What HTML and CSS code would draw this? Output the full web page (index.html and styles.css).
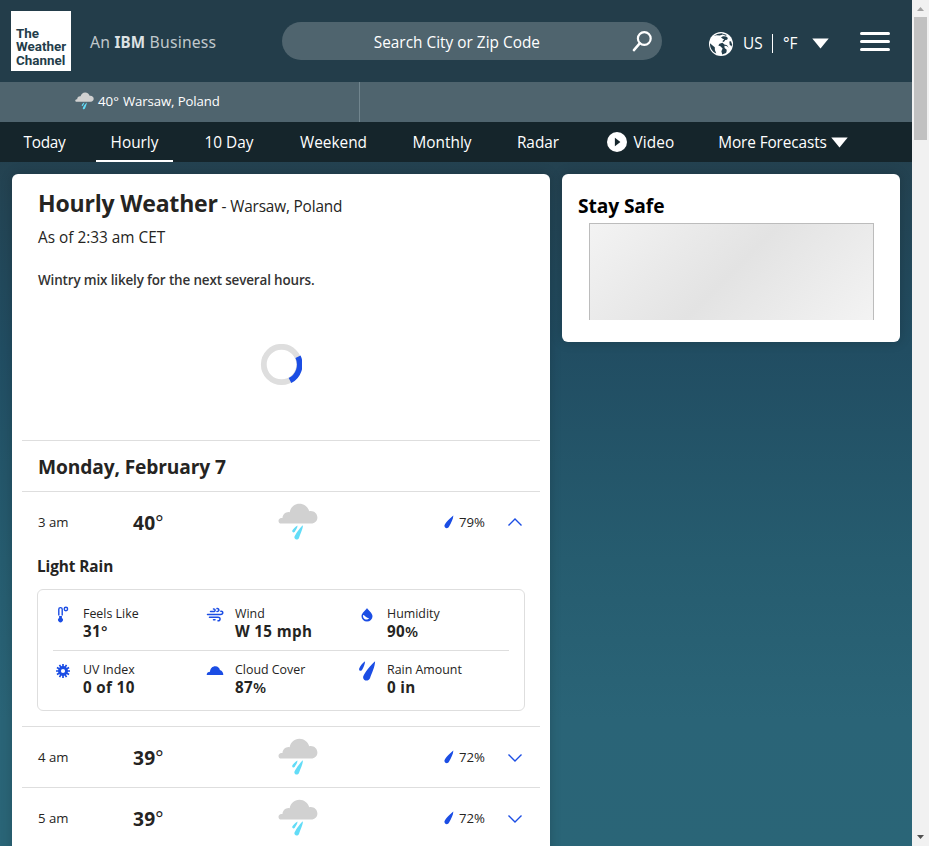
FILE: index.html
```html
<!DOCTYPE html>
<html lang="en">
<head>
<meta charset="utf-8">
<title>Hourly Weather - Warsaw, Poland</title>
<link rel="stylesheet" href="styles.css">
</head>
<body>
<svg class="defs" aria-hidden="true">
  <symbol id="rain-cloud" viewBox="0 0 40 38">
    <path fill="#d1d1d1" d="M3.3 20.6C1.700 20.600.5 19.400.5 17.900S1.700 15.200 3.300 15.100L4.500 15.100C4.500 11.800 7.300 9 10.800 9.100L11.700 9.200C12.400 4.400 16.400 .8 21.300.8 26.200.8 30.100 4.100 31.200 8.200 35.700 7.300 39.400 10.500 39.400 14.500 39.400 17.900 36.700 20.600 33.200 20.600Z"/>
    <path fill="#62dcf7" d="M24.8 22.300C25.300 24.900 22.900 29.700 21 34.900 19.600 37.700 15.600 36.400 16.500 33.600 17.200 31.900 20.500 26.500 24.800 22.300ZM19.500 22.400C19.600 24.800 17.900 26.700 16.800 28.800 15.800 30.200 13.700 29.200 14.300 27.600 15 26.200 16.800 24 19.500 22.400Z"/>
  </symbol>
  <symbol id="drop" viewBox="0 0 10 14">
    <path fill="#1b4de4" d="M9.300.4C9.500 3.500 7.300 7.500 5.100 11.600 3.700 14.300-.1 13.200.5 10.200 1.600 7.500 5.600 3.600 9.300.4Z"/>
  </symbol>
  <symbol id="chevron" viewBox="0 0 16 10">
    <path fill="none" stroke="#1b4de4" stroke-width="1.400" d="M1.500 1.600 8 8 14.500 1.600"/>
  </symbol>
</svg>

<div class="viewport">
  <div class="page">
    <header class="header">
      <div class="logo">The<br>Weather<br>Channel</div>
      <div class="tagline">An <b>IBM</b> Business</div>
      <div class="search">
        <span class="search-text">Search City or Zip Code</span>
        <svg class="search-icon" width="20" height="22" viewBox="0 0 20 22"><circle cx="12.300" cy="8.500" r="6.400" fill="none" stroke="#fff" stroke-width="2.200"/><path d="M7.700 13.400 1.900 20.100" stroke="#fff" stroke-width="2.500" stroke-linecap="round"/></svg>
      </div>
      <svg class="globe" width="24" height="24" viewBox="0 0 24 24"><circle cx="12" cy="12" r="12" fill="#fff"/><g fill="#233d4a"><path d="M4.600 4.100 8.300 1.900 12.500 1.200 17.800 2.900 16.800 3.700 13.800 2.500 10.800 3.500 7.500 3.300Z"/><path d="M12 5.300 14.200 4.200 17.100 4.500 18.900 6.100 18.100 7.800 16.300 8 14.800 9.900 13.300 9.200 15.200 7.200 13.700 6.700Z"/><path d="M1 11.200 3.300 13.300 5.800 15.300 5.900 18 7.300 21.500C3.300 19.800 .8 16 1 11.200Z"/><path d="M10.500 11.800 13.500 10.800 15.400 12.500 18 13.200 19.600 15.500 18.800 18.500 17 21 13.200 22.600 12.400 19.300 13.600 16.600 11.400 14.300 9.300 13.500Z"/><path d="M20.300 9.500 22 9.300 23.100 12.400 22.500 14.400 20.700 12.500Z"/></g><path fill="#fff" d="M15.400 13.800 17.500 14 21.300 16.600 19.500 20 17.500 21 17.700 17.700 15.600 16Z"/></svg>
      <span class="locale">US</span>
      <span class="unit">°F</span>
      <svg class="unit-arrow" width="17" height="11" viewBox="0 0 17 11"><path d="M.3.500H16.700L8.500 10.500Z" fill="#fff"/></svg>
      <div class="menu"><i></i><i></i><i></i></div>
    </header>

    <div class="places">
      <div class="place">
        <svg width="19" height="18" viewBox="0 0 40 38"><use href="#rain-cloud"/></svg>
        <span class="place-temp">40°</span>
        <span class="place-name">Warsaw, Poland</span>
      </div>
    </div>

    <nav class="nav">
      <a>Today</a>
      <a class="active">Hourly</a>
      <a>10 Day</a>
      <a>Weekend</a>
      <a>Monthly</a>
      <a>Radar</a>
      <a class="video"><svg width="20" height="20" viewBox="0 0 20 20"><circle cx="10" cy="10" r="10" fill="#fff"/><path d="M7.900 5.800 13.400 10 7.900 14.200Z" fill="#15252b"/></svg><span>Video</span></a>
      <a class="more"><span>More Forecasts</span><svg width="17" height="11" viewBox="0 0 17 11"><path d="M.3.500H16.700L8.500 10.500Z" fill="#fff"/></svg></a>
    </nav>

    <div class="columns">
      <main class="card hourly">
        <h1>Hourly Weather<span> - Warsaw, Poland</span></h1>
        <p class="asof">As of 2:33 am CET</p>
        <p class="summary">Wintry mix likely for the next several hours.</p>
        <div class="loading">
          <svg width="42" height="42" viewBox="0 0 42 42"><circle cx="21.500" cy="20.500" r="17.700" fill="none" stroke="#dedede" stroke-width="5.800"/><path d="M38 12.800A18.200 18.200 0 0 1 30 36.600" fill="none" stroke="#1b4de4" stroke-width="5.600"/></svg>
        </div>
        <h2>Monday, February 7</h2>

        <section class="hour">
          <div class="hour-row">
            <span class="time">3 am</span>
            <span class="temp"><b>40</b>°</span>
            <svg class="sky" width="40" height="38"><use href="#rain-cloud"/></svg>
            <svg class="drop" width="10" height="14"><use href="#drop"/></svg>
            <span class="chance">79%</span>
            <svg class="chevron up" width="16" height="10"><use href="#chevron"/></svg>
          </div>
          <h3>Light Rain</h3>
          <div class="details">
            <div class="detail">
              <svg width="20" height="22" viewBox="0 0 20 22"><g fill="none" stroke="#1b4de4"><path stroke-width="1.400" d="M5.800 11.500V5.300A1.700 1.700 0 0 1 9.200 5.300V11.500"/><circle cx="12.900" cy="5" r="1.700" stroke-width="1.400"/></g><path fill="#1b4de4" d="M6.100 12H8.900V14A2.400 2.400 0 1 1 6.100 14Z"/></svg>
              <div><span class="label">Feels Like</span><span class="value">31<i>°</i></span></div>
            </div>
            <div class="detail">
              <svg width="20" height="22" viewBox="0 0 20 22"><g fill="none" stroke="#1b4de4" stroke-width="1.500" stroke-linecap="round"><path d="M5.500 7.500H8.500C10.700 7.500 10.600 4.800 8.500 4.900M2.500 10.500H15.500C18.600 10.500 18.300 6.900 15.900 7.300M12 7.500C14.600 7.500 14.300 4.300 12 4.600M4.500 13.200H13C15.900 13.200 15.500 17.200 13 16.800M8.500 15.700H10"/></g></svg>
              <div><span class="label">Wind</span><span class="value">W 15 mph</span></div>
            </div>
            <div class="detail">
              <svg width="20" height="22" viewBox="0 0 20 22"><path fill="#1b4de4" d="M10 4C11.200 6.300 15.500 8.900 15.500 12.300A5.500 5.200 0 0 1 4.500 12.300C4.500 8.900 8.800 6.300 10 4Z"/><path fill="#fff" d="M6.200 10.900C7.800 10.800 8.500 13.600 12.200 14.200 9.600 17 5.100 14.700 6.200 10.900Z"/></svg>
              <div><span class="label">Humidity</span><span class="value">90<i>%</i></span></div>
            </div>
            <div class="detail">
              <svg width="20" height="22" viewBox="0 0 20 22"><circle cx="10" cy="11" r="3.500" fill="none" stroke="#1b4de4" stroke-width="2.800"/><path fill="none" stroke="#1b4de4" stroke-width="1.700" d="M10 4V18M3 11H17M6.500 4.940 13.500 17.060M13.500 4.940 6.500 17.060M3.940 7.500 16.060 14.500M3.940 14.500 16.060 7.500"/><circle cx="10" cy="11" r="2.100" fill="#fff"/></svg>
              <div><span class="label">UV Index</span><span class="value">0 of 10</span></div>
            </div>
            <div class="detail">
              <svg width="20" height="22" viewBox="0 0 20 22"><path fill="#1b4de4" d="M1.700 14.900C1.700 12.700 3.200 11.800 5 11.800 5.200 8.500 7.500 6.300 10.300 6.300 13 6.300 14.500 8.200 14.900 9.900 17.300 10.600 18.400 12.800 18.300 14.900Z"/></svg>
              <div><span class="label">Cloud Cover</span><span class="value">87<i>%</i></span></div>
            </div>
            <div class="detail">
              <svg width="20" height="22" viewBox="0 0 20 22"><path fill="#1b4de4" d="M18.100 1.200C17.900 7 14.700 13.300 13 18.200 11.200 22.400 5 20.700 6.300 16.300 7.800 12.300 13 5.600 18.100 1.200ZM8.100 1.200C7.900 4.800 6.300 7.500 5.300 9.500 4.400 11.500 1.500 11 2.200 8.400 3.300 5.800 5.500 3.100 8.100 1.200Z"/></svg>
              <div><span class="label">Rain Amount</span><span class="value">0 in</span></div>
            </div>
          </div>
        </section>

        <section class="hour">
          <div class="hour-row">
            <span class="time">4 am</span>
            <span class="temp"><b>39</b>°</span>
            <svg class="sky" width="40" height="38"><use href="#rain-cloud"/></svg>
            <svg class="drop" width="10" height="14"><use href="#drop"/></svg>
            <span class="chance">72%</span>
            <svg class="chevron" width="16" height="10"><use href="#chevron"/></svg>
          </div>
        </section>

        <section class="hour">
          <div class="hour-row">
            <span class="time">5 am</span>
            <span class="temp"><b>39</b>°</span>
            <svg class="sky" width="40" height="38"><use href="#rain-cloud"/></svg>
            <svg class="drop" width="10" height="14"><use href="#drop"/></svg>
            <span class="chance">72%</span>
            <svg class="chevron" width="16" height="10"><use href="#chevron"/></svg>
          </div>
        </section>
      </main>

      <aside class="card safe">
        <h2>Stay Safe</h2>
        <div class="placeholder"></div>
      </aside>
    </div>
  </div>

  <div class="scrollbar">
    <svg width="17" height="17" viewBox="0 0 17 17"><path d="M5 11 8.500 7 12 11Z" fill="#a3a3a3"/></svg>
    <div class="thumb"></div>
    <svg class="down" width="17" height="17" viewBox="0 0 17 17"><path d="M5 6 8.500 10 12 6Z" fill="#505050"/></svg>
  </div>
</div>
</body>
</html>
```
FILE: styles.css
```css
* { box-sizing: border-box; }

body {
  margin: 0;
  overflow: hidden;
  font-family: "Open Sans", "Noto Sans", sans-serif;
  font-size: 15.36px;
  color: #252422;
}

h1, h2, h3, p { margin: 0; }
svg { display: block; flex: none; }
.defs { display: none; }

.viewport {
  display: flex;
  height: 846px;
  overflow: hidden;
}

.page {
  width: 912px;
  height: 846px;
  overflow: hidden;
  background: linear-gradient(#233d4a 0, #24414f 150px, #214d62 350px, #265c6f 560px, #2a6477 720px, #2a6577 846px);
}

/* Header */
.header {
  display: flex;
  align-items: center;
  height: 82px;
  background: #233d4a;
  color: #fff;
  white-space: nowrap;
}

.logo {
  width: 60px;
  height: 60px;
  margin-left: 11px;
  padding: 16px 0 0 5px;
  background: #fff;
  color: #233d4a;
  font: bold 13.4px/13.300px Roboto, sans-serif;
}

.tagline {
  width: 192px;
  padding: 1px 0 0 19px;
  font-family: "Noto Sans", sans-serif;
  font-size: 15.7px;
  letter-spacing: 0.2px;
  color: #c0c8cc;
}
.tagline b { font-size: 15.2px; color: #dde2e4; }

.search {
  display: flex;
  justify-content: flex-end;
  align-items: center;
  width: 380px;
  height: 38px;
  margin-left: 19px;
  padding-right: 10px;
  border-radius: 19px;
  background: #4f646e;
}
.search-text {
  padding-top: 2px;
  margin-right: 92px;
  letter-spacing: 0.02px;
}
.search-icon { margin-top: -1px; }

.globe { margin: 6px 0 0 47px; }
.locale {
  width: 40px;
  height: 19px;
  margin: 5px 0 0;
  padding-left: 10px;
  border-right: 1px solid #fff;
  line-height: 20px;
}
.unit { width: 39px; padding: 5px 0 0 10px; line-height: 20px; }
.unit-arrow { margin-top: 5px; }

.menu {
  display: grid;
  gap: 5px;
  width: 30px;
  margin: 1px 0 0 31px;
}
.menu i { height: 3px; border-radius: 1.5px; background: #fff; }

/* Saved locations */
.places { height: 40px; background: #4f646e; color: #fff; }
.place {
  display: flex;
  align-items: center;
  width: 360px;
  height: 40px;
  padding: 0 0 2px 75px;
  border-right: 1px solid #71858e;
  font-size: 13.3px;
}
.place-temp { width: 25px; margin-left: 4px; font-size: 13.3px; }
.place-name { font-size: 13.2px; font-weight: 500; letter-spacing: -0.11px; }

/* Navigation */
.nav {
  display: grid;
  grid-template-columns: 71px 77px 80px 97px 88px 72px 101px 152px;
  grid-template-rows: 40px;
  column-gap: 16px;
  height: 40px;
  padding-left: 9px;
  background: #15252b;
  color: #fff;
  line-height: 42px;
  text-align: center;
  white-space: nowrap;
}
.nav .active { border-bottom: 2px solid #fff; }
.nav a:first-child { letter-spacing: -0.25px; }
.nav .video, .nav .more {
  display: flex;
  justify-content: center;
  align-items: center;
}
.nav .video { gap: 7px; letter-spacing: 0.1px; }
.nav .more { gap: 4px; letter-spacing: -0.1px; }
.nav span { padding-top: 2px; }

/* Content */
.columns {
  display: flex;
  align-items: flex-start;
  gap: 12px;
  padding: 12px;
}
.card {
  border-radius: 6px;
  background: #fff;
  box-shadow: 0 0 12px rgba(0, 0, 0, 0.18);
}
.hourly { width: 538px; height: 700px; padding: 13px 10px 0; }

h1 {
  height: 32px;
  padding-left: 16px;
  font-size: 23.04px;
  line-height: 32px;
  letter-spacing: -0.2px;
  white-space: nowrap;
}
h1 span {
  font-size: 15.36px;
  font-weight: 400;
  line-height: 1;
  letter-spacing: -0.17px;
}
.asof { margin: 7px 0 20px; padding-left: 16px; line-height: 24px; }
.summary {
  padding-left: 16px;
  font-size: 13.44px;
  font-weight: 600;
  line-height: 20px;
  letter-spacing: -0.14px;
  color: #333;
}
.loading {
  display: flex;
  justify-content: center;
  align-items: center;
  height: 150px;
  padding-bottom: 1px;
}
.hourly h2 {
  height: 51px;
  padding: 1px 0 0 16px;
  border-top: 1px solid #dedede;
  font-size: 19.2px;
  font-weight: 700;
  line-height: 50px;
  letter-spacing: -0.13px;
}

.hour { border-top: 1px solid #dedede; padding: 0 15px; }
.hour-row {
  display: grid;
  grid-template-columns: 95px 145px 166px 15px 48px 16px;
  align-items: center;
  height: 60px;
  padding-left: 1px;
}
.time, .chance { font-size: 13.2px; }
.temp { font-size: 19.2px; }
.temp b { letter-spacing: 0.2px; }

h3 {
  margin: 4px 0 11px;
  font-size: 15.36px;
  line-height: 22px;
  letter-spacing: -0.08px;
}
.chevron { margin-top: 1px; }
.chevron.up { margin-top: 0; transform: rotate(180deg); }

.details {
  display: grid;
  grid-template-columns: repeat(3, 152px);
  grid-template-rows: 61px 59px;
  height: 122px;
  margin-bottom: 15px;
  padding: 0 15px;
  border: 1px solid #dedede;
  border-radius: 6px;
}
.detail { display: flex; gap: 10px; padding-top: 15px; white-space: nowrap; }
.detail:nth-child(-n + 3) { border-bottom: 1px solid #dedede; }
.detail:nth-child(n + 4) { padding-top: 10px; }
.detail svg { margin-top: -1px; }
.label, .value { display: block; }
.label { font-size: 12.4px; line-height: 17px; }
.value {
  font-size: 15.2px;
  font-weight: 700;
  line-height: 18px;
  letter-spacing: 0.35px;
}
.value i { font-style: normal; font-weight: 600; }

.safe { width: 338px; height: 168px; padding: 15px 16px 0; }
.safe h2 {
  padding-bottom: 1px;
  font-size: 19.2px;
  font-weight: 700;
  line-height: 33px;
  letter-spacing: -0.1px;
  color: #000;
}
.placeholder {
  width: 285px;
  height: 97px;
  margin-left: 11px;
  border: 1px solid #bcbcbc;
  border-bottom: 0;
  background: linear-gradient(135deg, #f3f3f3, #e3e3e3 50%, #f3f3f3);
}

/* Scrollbar */
.scrollbar {
  display: flex;
  flex-direction: column;
  width: 17px;
  background: #f1f1f1;
}
.thumb { width: 13px; height: 123px; margin: 0 2px; background: #c1c1c1; }
.down { margin-top: auto; }
```
